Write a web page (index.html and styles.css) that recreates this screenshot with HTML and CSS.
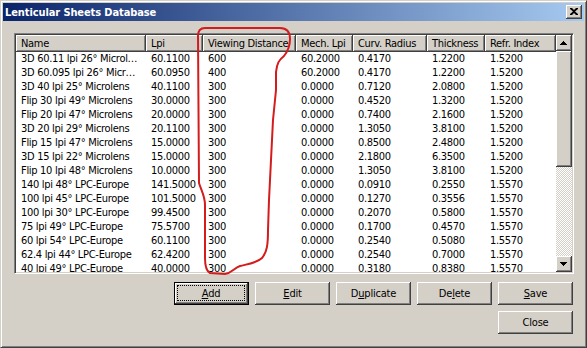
FILE: index.html
```html
<!DOCTYPE html>
<html>
<head>
<meta charset="utf-8">
<link rel="stylesheet" href="styles.css">
</head>
<body>
<div class="window">
  <div class="titlebar">
    <span class="title">Lenticular Sheets Database</span>
    <span class="cap-btn"><svg width="8" height="7" viewBox="0 0 8 7"><path d="M0 0h2l2 2 2-2h2v1l-3 2.5 3 2.5v1h-2l-2-2-2 2h-2v-1l3-2.5-3-2.5z" fill="#000"/></svg></span>
  </div>
  <div class="client">
    <div class="listview">
      <div class="grid-area">
        <table class="grid">
          <colgroup>
            <col class="c-name"><col class="c-lpi"><col class="c-vd"><col class="c-mech"><col class="c-curv"><col class="c-thick"><col class="c-refr">
          </colgroup>
          <thead>
            <tr><th>Name</th><th>Lpi</th><th>Viewing Distance</th><th>Mech. Lpi</th><th>Curv. Radius</th><th>Thickness</th><th>Refr. Index</th></tr>
          </thead>
          <tbody>
            <tr><td>3D 60.11 lpi 26° Microl…</td><td>60.1100</td><td>600</td><td>60.2000</td><td>0.4170</td><td>1.2200</td><td>1.5200</td></tr>
            <tr><td>3D 60.095 lpi 26° Micr…</td><td>60.0950</td><td>400</td><td>60.2000</td><td>0.4170</td><td>1.2200</td><td>1.5200</td></tr>
            <tr><td>3D 40 lpi 25° Microlens</td><td>40.1100</td><td>300</td><td>0.0000</td><td>0.7120</td><td>2.0800</td><td>1.5200</td></tr>
            <tr><td>Flip 30 lpi 49° Microlens</td><td>30.0000</td><td>300</td><td>0.0000</td><td>0.4520</td><td>1.3200</td><td>1.5200</td></tr>
            <tr><td>Flip 20 lpi 47° Microlens</td><td>20.0000</td><td>300</td><td>0.0000</td><td>0.7400</td><td>2.1600</td><td>1.5200</td></tr>
            <tr><td>3D 20 lpi 29° Microlens</td><td>20.1100</td><td>300</td><td>0.0000</td><td>1.3050</td><td>3.8100</td><td>1.5200</td></tr>
            <tr><td>Flip 15 lpi 47° Microlens</td><td>15.0000</td><td>300</td><td>0.0000</td><td>0.8500</td><td>2.4800</td><td>1.5200</td></tr>
            <tr><td>3D 15 lpi 22° Microlens</td><td>15.0000</td><td>300</td><td>0.0000</td><td>2.1800</td><td>6.3500</td><td>1.5200</td></tr>
            <tr><td>Flip 10 lpi 48° Microlens</td><td>10.0000</td><td>300</td><td>0.0000</td><td>1.3050</td><td>3.8100</td><td>1.5200</td></tr>
            <tr><td>140 lpi 48° LPC-Europe</td><td>141.5000</td><td>300</td><td>0.0000</td><td>0.0910</td><td>0.2550</td><td>1.5570</td></tr>
            <tr><td>100 lpi 45° LPC-Europe</td><td>101.5000</td><td>300</td><td>0.0000</td><td>0.1270</td><td>0.3556</td><td>1.5570</td></tr>
            <tr><td>100 lpi 30° LPC-Europe</td><td>99.4500</td><td>300</td><td>0.0000</td><td>0.2070</td><td>0.5800</td><td>1.5570</td></tr>
            <tr><td>75 lpi 49° LPC-Europe</td><td>75.5700</td><td>300</td><td>0.0000</td><td>0.1700</td><td>0.4570</td><td>1.5570</td></tr>
            <tr><td>60 lpi 54° LPC-Europe</td><td>60.1100</td><td>300</td><td>0.0000</td><td>0.2540</td><td>0.5080</td><td>1.5570</td></tr>
            <tr><td>62.4 lpi 44° LPC-Europe</td><td>62.4200</td><td>300</td><td>0.0000</td><td>0.2540</td><td>0.7000</td><td>1.5570</td></tr>
            <tr><td>40 lpi 49° LPC-Europe</td><td>40.0000</td><td>300</td><td>0.0000</td><td>0.3180</td><td>0.8380</td><td>1.5570</td></tr>
          </tbody>
        </table>
      </div>
      <div class="vscroll">
        <div class="sb-btn"><svg width="7" height="4" viewBox="0 0 7 4"><path d="M3 0h1v1h1v1h1v1h1v1H0V3h1V2h1V1h1z" fill="#000"/></svg></div>
        <div class="sb-thumb"></div>
        <div class="sb-track"></div>
        <div class="sb-btn"><svg width="7" height="4" viewBox="0 0 7 4"><path d="M0 0h7v1H6v1H5v1H4v1H3V3H2V2H1V1H0z" fill="#000"/></svg></div>
      </div>
    </div>
    <div class="buttons">
      <div class="btn-row">
        <button class="btn default"><span class="focus"><u>A</u>dd</span></button>
        <button class="btn"><span><u>E</u>dit</span></button>
        <button class="btn"><span>D<u>u</u>plicate</span></button>
        <button class="btn"><span>De<u>l</u>ete</span></button>
        <button class="btn"><span><u>S</u>ave</span></button>
      </div>
      <div class="btn-row">
        <button class="btn"><span>Close</span></button>
      </div>
    </div>
  </div>
  <svg class="annotation" width="587" height="348" viewBox="0 0 587 348">
    <path d="M199 183 L198 36 C198 31 200 28 205 28 L280 28 C287 28 290 32 290 39 C290 46 288 51 284 56 C279 60 277 63 276 72 L276 90 L273 120 L271 160 L269 200 L268 230 C268 245 267 252 262 258 C257 263 248 264 240 266 C234 268 232 273 225 274 L210 273 C206 271 205 266 205 258 L205 205 C205 196 201 190 199 183" fill="none" stroke="#d41c1c" stroke-width="2" stroke-linejoin="round" stroke-linecap="round"/>
  </svg>
</div>
</body>
</html>
```
FILE: styles.css
```css
* { box-sizing: border-box; }
html, body { margin: 0; padding: 0; }
body {
  font-family: "DejaVu Sans Condensed", "DejaVu Sans", sans-serif;
  font-stretch: condensed;
  font-size: 11px;
  color: #000;
  background: #d4d0c8;
}
.window {
  position: relative;
  width: 587px;
  height: 348px;
  background: #d4d0c8;
  border: 1px solid;
  border-color: #d4d0c8 #404040 #404040 #d4d0c8;
  box-shadow: inset 1px 1px #fff, inset -1px -1px #808080;
  padding: 2px;
  display: flex;
  flex-direction: column;
}
.titlebar {
  height: 18px;
  background: linear-gradient(to right, #0a246a, #a6caf0);
  display: flex;
  align-items: center;
  justify-content: space-between;
  padding: 0 2px 0 2px;
}
.title {
  color: #fff;
  font-weight: bold;
  letter-spacing: -0.1px;
}
.cap-btn {
  width: 16px;
  height: 14px;
  background: #d4d0c8;
  box-shadow: inset -1px -1px #404040, inset 1px 1px #fff, inset -2px -2px #808080;
  display: flex;
  align-items: center;
  justify-content: center;
  padding: 0 1px 1px 0;
}
.cap-btn svg { display: block; }
.client {
  flex: 1;
  padding: 12px 10px 0 11px;
  display: flex;
  flex-direction: column;
}
.listview {
  width: 560px;
  height: 241px;
  border: 1px solid;
  border-color: #808080 #fff #fff #808080;
  box-shadow: inset 1px 1px #404040, inset -1px -1px #d4d0c8;
  padding: 1px;
  background: #fff;
  display: flex;
}
.grid-area {
  width: 540px;
  height: 237px;
  overflow: hidden;
  background: #fff;
}
.grid {
  border-collapse: collapse;
  table-layout: fixed;
  width: 540px;
  letter-spacing: -0.3px;
}
.c-name { width: 130px; }
.c-lpi { width: 57px; }
.c-vd { width: 93px; }
.c-mech { width: 57px; }
.c-curv { width: 74px; }
.c-thick { width: 58px; }
.c-refr { width: 71px; }
.grid th {
  height: 17px;
  padding: 0 0 0 5px;
  font-weight: normal;
  text-align: left;
  background: #d4d0c8;
  box-shadow: inset -1px -1px #404040, inset 1px 1px #fff, inset -2px -2px #808080;
  white-space: nowrap;
  overflow: hidden;
}
.grid td {
  height: 14px;
  line-height: 14px;
  padding: 0 0 0 5px;
  white-space: nowrap;
  overflow: hidden;
}
.vscroll {
  width: 16px;
  height: 237px;
  display: flex;
  flex-direction: column;
}
.sb-btn {
  width: 16px;
  height: 16px;
  flex: none;
  background: #d4d0c8;
  box-shadow: inset -1px -1px #404040, inset 1px 1px #fff, inset -2px -2px #808080;
  display: flex;
  align-items: center;
  justify-content: center;
  padding: 0 1px 1px 0;
}
.sb-btn svg { display: block; }
.sb-thumb {
  height: 116px;
  flex: none;
  background: #d4d0c8;
  box-shadow: inset -1px -1px #404040, inset 1px 1px #fff, inset -2px -2px #808080;
}
.sb-track {
  flex: 1;
  background: repeating-conic-gradient(#fff 0 25%, #d4d0c8 0 50%) 0 0 / 2px 2px;
}
.buttons {
  margin-top: 8px;
  display: flex;
  flex-direction: column;
  gap: 6px;
  padding-right: 1px;
}
.btn-row {
  display: flex;
  justify-content: flex-end;
  gap: 6px;
}
.btn {
  width: 75px;
  height: 23px;
  margin: 0;
  padding: 0;
  border: none;
  background: #d4d0c8;
  font: inherit;
  letter-spacing: -0.2px;
  color: #000;
  box-shadow: inset -1px -1px #404040, inset 1px 1px #fff, inset -2px -2px #808080;
  display: flex;
  align-items: center;
  justify-content: center;
}
.btn.default {
  border: 1px solid #000;
  box-shadow: inset -1px -1px #404040, inset 1px 1px #fff, inset -2px -2px #808080;
  padding: 3px 4px 4px 3px;
}
.btn .focus {
  flex: 1;
  align-self: stretch;
  display: flex;
  align-items: center;
  justify-content: center;
  outline: 1px dotted #000;
}
.annotation {
  position: absolute;
  left: -1px;
  top: -1px;
  pointer-events: none;
}
```
